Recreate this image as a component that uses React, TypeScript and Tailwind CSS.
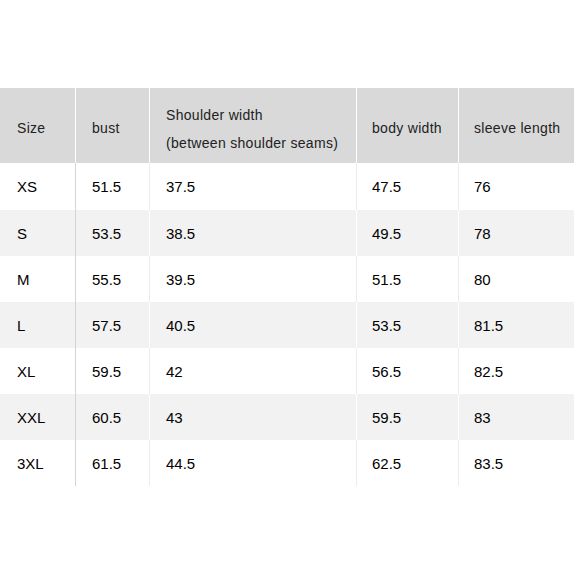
import React from 'react';

const rows = [
  ['XS', '51.5', '37.5', '47.5', '76'],
  ['S', '53.5', '38.5', '49.5', '78'],
  ['M', '55.5', '39.5', '51.5', '80'],
  ['L', '57.5', '40.5', '53.5', '81.5'],
  ['XL', '59.5', '42', '56.5', '82.5'],
  ['XXL', '60.5', '43', '59.5', '83'],
  ['3XL', '61.5', '44.5', '62.5', '83.5'],
];

const cols = 'grid grid-cols-[75px_74px_207px_102px_116px]';

const App: React.FC = () => {
  return (
    <div className="w-[574px] h-[574px] bg-white pt-[88px] font-['Liberation_Sans',Arial,sans-serif] text-black">
      {/* Header */}
      <div className={`${cols} h-[75px] bg-[#d9d9d9] text-[14px] tracking-[0.3px] text-[#222]`}>
        <div className="flex items-center pl-[17px] pt-[5px]">Size</div>
        <div className="flex items-center pl-[16px] pt-[5px] border-l border-white">bust</div>
        <div className="flex flex-col justify-center pl-[16px] pt-[6px] border-l border-white leading-[28px]">
          <span>Shoulder width</span>
          <span>(between shoulder seams)</span>
        </div>
        <div className="flex items-center pl-[15px] pt-[5px] border-l border-white">body width</div>
        <div className="flex items-center pl-[15px] pt-[5px] border-l border-white">sleeve length</div>
      </div>

      {/* Body */}
      {rows.map((r, i) => {
        const gray = i % 2 === 1;
        const line = gray ? 'border-white' : 'border-[#ececec]';
        return (
          <div
            key={r[0]}
            className={`${cols} ${i === 0 ? 'h-[47px]' : 'h-[46px]'} text-[15px] ${gray ? 'bg-[#f2f2f2]' : 'bg-white'}`}
          >
            <div className="flex items-center pl-[17px] pt-[2px]">{r[0]}</div>
            <div className="flex items-center pl-[16px] pt-[2px] border-l border-[#d4d4d4]">{r[1]}</div>
            <div className={`flex items-center pl-[16px] pt-[2px] border-l ${line}`}>{r[2]}</div>
            <div className={`flex items-center pl-[15px] pt-[2px] border-l ${line}`}>{r[3]}</div>
            <div className={`flex items-center pl-[15px] pt-[2px] border-l ${line}`}>{r[4]}</div>
          </div>
        );
      })}
    </div>
  );
};

export default App;
